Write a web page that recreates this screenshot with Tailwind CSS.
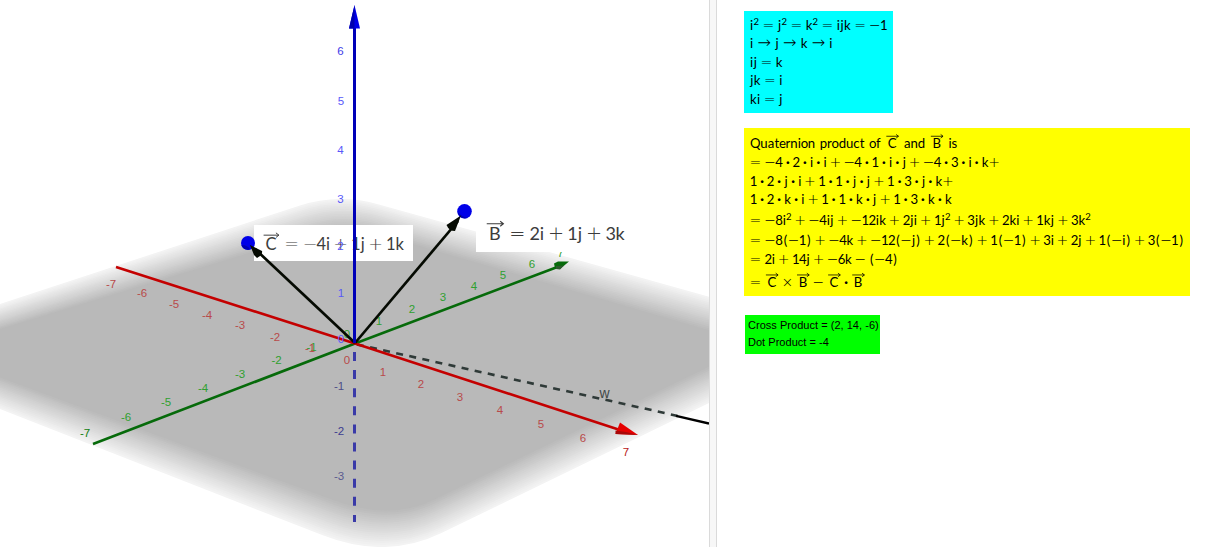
<!DOCTYPE html>
<html lang="en">
<head>
    <meta charset="UTF-8">
    <meta name="viewport" content="width=device-width, initial-scale=1.0">
    <title>Quaternion Product</title>
    <script src="https://cdn.jsdelivr.net/npm/@tailwindcss/browser@4"></script>
</head>
<body class="bg-white h-[549px] overflow-hidden">
    <div class="flex h-[547px]">
        <!-- 3D view -->
        <main class="w-[709px] shrink-0 overflow-hidden">
            <svg id="view3d" class="block font-['Liberation_Sans',sans-serif] text-[11.5px]" width="709" height="547" viewBox="0 0 709 547">
                <g id="plane"></g>
                <!-- Label backgrounds -->
                <rect x="254" y="225" width="159" height="36" fill="#fff"/>
                <!-- w vector -->
                <path d="M355 344L678 416" stroke="#2f3a38" stroke-width="2.6" stroke-dasharray="7 6.4" stroke-dashoffset="-2" fill="none"/>
                <path d="M676 415.800L709 423.500" stroke="#000" stroke-width="2.4"/>
                <!-- y axis -->
                <path d="M93 444L355 343.500L560 266" stroke="#066a0a" stroke-width="2.6" fill="none"/>
                <g id="yTicks"></g>
                <path d="M554 263.500L558 261.500L569 261.500L560 269L555 268Z" fill="#066a0a"/>
                <path d="M556 266L564 265.500L560 269.500L556 269Z" fill="#2c5a2c"/>
                <rect x="476" y="215" width="159" height="37" fill="#fff"/>
                <g id="labels"></g>
                <!-- x axis -->
                <path d="M116 267L355 343.500L620 430" stroke="#c40000" stroke-width="2.6" fill="none"/>
                <path d="M620 422.500L638 435L615.500 434Z" fill="#e60000"/>
                <path d="M615.500 430.500L626 432L638 435L615.500 434Z" fill="#a80808"/>
                <g id="xTicks"></g>
                <!-- Vectors C and B -->
                <g stroke="#050a02" stroke-width="2.7">
                    <path d="M355 343L255 249"/>
                    <path d="M355 343L458 221"/>
                </g>
                <circle cx="248" cy="243" r="7" fill="#0000e8"/>
                <path d="M241.500 245Q248 245 250 249.500Q243 250.500 241.500 245Z" fill="#0000b0"/>
                <circle cx="464.500" cy="211.300" r="7.300" fill="#0000e8"/>
                <path d="M457.500 212Q462 217 468 218Q460 220 457.500 212Z" fill="#0000b0"/>
                <path d="M250 245L262 251Q263 255 257 258L254 255Z" fill="#050a02"/>
                <path d="M461 215.500L446.500 225Q449 231 455 231Z" fill="#050a02"/>
                <!-- z axis -->
                <path d="M354.500 343V26" stroke="#0000b8" stroke-width="3"/>
                <path d="M354.500 352V522" stroke="#3a3aa8" stroke-width="3" stroke-dasharray="9 9.100"/>
                <path d="M354.500 5L360 28.500H349Z" fill="#0000e8"/>
                <path d="M354.500 5V28.500H349Z" fill="#0000b0"/>
                <g id="zTicks"></g>
                <text x="604.500" y="397.500" text-anchor="middle" fill="#3f4848" class="text-[14px]">w</text>
            </svg>
        </main>
        <div class="w-2 shrink-0 bg-[#f7f7f7] border-x border-[#dadada]"></div>
        <!-- Text panel -->
        <aside class="pl-[27px] pt-[11px] grow">
            <div class="w-[149px] h-[102px] bg-[#00ffff]">
                <svg id="rules" class="block" width="149" height="102"></svg>
            </div>
            <div class="mt-[15px] w-[446px] h-[168px] bg-[#ffff00]">
                <svg id="product" class="block" width="446" height="168"></svg>
            </div>
            <div class="mt-[19px] ml-px pl-[3px] pt-[2px] w-[135px] h-[39px] bg-[#00ff00] text-black font-['Liberation_Sans',sans-serif] text-[11px] leading-[17px] whitespace-nowrap tracking-[0.03px]">
                <p>Cross Product = (2, 14, -6)</p>
                <p>Dot Product = -4</p>
            </div>
        </aside>
    </div>

    <script>
        const NS = 'http://www.w3.org/2000/svg';

        function add(parent, tag, attrs, text) {
            const el = document.createElementNS(NS, tag);
            for (const key in attrs) el.setAttribute(key, attrs[key]);
            if (text !== undefined) el.textContent = text;
            parent.appendChild(el);
            return el;
        }

        // Plane fades out towards its edge: nested rounded quads, outer to inner
        const outer = [[-146, 352], [338, 193], [848, 335.5], [386, 560]];
        const inner = [[-72, 351], [344, 224], [756, 344], [390, 521]];
        const round = [0.12, 0.08, 0.12, 0.12];
        const steps = 18;
        for (let i = 0; i <= steps; i++) {
            const t = i / steps;
            const p = outer.map((o, n) => [o[0] + (inner[n][0] - o[0]) * t, o[1] + (inner[n][1] - o[1]) * t]);
            let d = '';
            p.forEach((c, n) => {
                const prev = p[(n + 3) % 4], next = p[(n + 1) % 4];
                const k = round[n];
                const a = [c[0] + (prev[0] - c[0]) * k, c[1] + (prev[1] - c[1]) * k];
                const b = [c[0] + (next[0] - c[0]) * k, c[1] + (next[1] - c[1]) * k];
                d += `${n ? 'L' : 'M'}${a}Q${c} ${b}`;
            });
            const g = Math.round(243 - 58 * t);
            add(document.getElementById('plane'), 'path', { d: d + 'Z', fill: `rgb(${g},${g},${g})` });
        }

        // Axis numbers: [text, centre x, centre y, colour]
        function ticks(id, list, color) {
            list.forEach(([s, x, y, c]) => add(document.getElementById(id), 'text', {
                x: x, y: y + 4, 'text-anchor': 'middle', fill: c || color
            }, s));
        }
        ticks('zTicks', [
            ['6', 340.5, 51, '#3c3ce8'], ['5', 341, 100.5], ['4', 340.5, 149.5], ['3', 340.5, 199], ['2', 340.5, 246],
            ['1', 341, 293], ['0', 341, 339], ['-1', 339, 386, '#4c4c88'], ['-2', 339, 431, '#3c3c90'], ['-3', 339, 476, '#5a5a90']
        ], '#5858fa');
        ticks('xTicks', [
            ['-7', 111, 284], ['-6', 142, 293], ['-5', 174, 303.5], ['-4', 207, 314.5], ['-3', 240, 325], ['-2', 275, 336.5],
            ['-1', 310, 348], ['0', 347, 360], ['1', 383, 372], ['2', 421, 384], ['3', 460, 397], ['4', 500, 410],
            ['5', 541, 423.5], ['6', 583, 437.5], ['7', 626, 452, '#b82020']
        ], '#b84a4a');
        ticks('yTicks', [
            ['-7', 85, 433, '#108010'], ['-6', 126, 417], ['-5', 166, 402], ['-4', 203, 388], ['-3', 240, 374], ['-2', 276.5, 360],
            ['-1', 311.5, 347], ['0', 347, 334], ['1', 379, 321], ['2', 412, 309], ['3', 443, 297], ['4', 474, 285.5],
            ['5', 503, 274.5], ['6', 532, 264], ['7', 560.5, 253]
        ], '#2fa02f');

        // Character widths in em
        const W = {
            Q: .736, u: .517, a: .481, t: .361, e: .444, r: .342, n: .517, i: .239, o: .5, p: .517, d: .517, c: .444,
            f: .306, s: .383, j: .267, k: .489, '+': .778, '−': .778, '=': .778, '×': .778, '·': .278, '→': 1,
            '(': .389, ')': .389, ' ': .222, '_': .333
        };

        // '~' puts an arrow over the next letter, '^' raises the next digit, '_' is a word space
        function math(svg, str, x, y, size, color) {
            const text = add(svg, 'text', { y: y, 'text-anchor': 'middle', fill: color, 'font-size': size * .94, class: "font-['Lato',sans-serif]" });
            for (let i = 0; i < str.length; i++) {
                let ch = str[i];
                if (ch === ' ' || ch === '_') {
                    add(text, 'tspan', { x: x + W[ch] * size / 2, y: y }, ' ');
                    x += W[ch] * size;
                } else if (ch === '~') {
                    ch = str[++i];
                    add(text, 'tspan', { x: x + size * .5, y: y }, ch);
                    const ay = y - size * .86, l = x + size * .08, r = x + size * .95, h = size * .13;
                    add(svg, 'path', {
                        d: `M${l} ${ay}H${r}M${r - h * 1.3} ${ay - h}L${r} ${ay}L${r - h * 1.3} ${ay + h}`,
                        stroke: color, 'stroke-width': size * .055, fill: 'none'
                    });
                    x += size;
                } else if (ch === '^') {
                    ch = str[++i];
                    add(text, 'tspan', { x: x + size * .2, y: y - size * .36, 'font-size': size * .68 }, ch);
                    x += size * .4;
                } else {
                    const w = (W[ch] || .5) * size;
                    const rel = ch === '=' || ch === '→' ? size * .278 : 0;
                    if (rel && i > 0) x += rel;
                    const attrs = { x: x + w / 2, y: y };
                    if ('+−=×→'.includes(ch)) {
                        attrs.class = "font-['DejaVu_Sans',sans-serif] font-extralight";
                        attrs['font-size'] = ch === '→' ? size * 1.15 : size;
                    }
                    if (ch === '·') attrs.class = 'font-black';
                    add(text, 'tspan', attrs, ch);
                    x += w + rel;
                }
            }
        }

        const labels = document.getElementById('labels');
        math(labels, '~C=−4i + 1j + 1k', 262.2, 250.3, 17.6, '#3c3c3c');
        math(labels, '~B=2i + 1j + 3k', 485.2, 240.3, 19.2, '#3c3c3c');

        const rules = document.getElementById('rules');
        [
            ['i^2=j^2=k^2=ijk=−1', 18.6], ['i→j→k→i', 37], ['ij=k', 55.6], ['jk=i', 74], ['ki=j', 92.6]
        ].forEach(([s, y]) => math(rules, s, 6, y, 14, '#000'));

        const product = document.getElementById('product');
        [
            ['Quaternion_product_of_~C_and_~B_is', 20.3],
            ['=−4 · 2 · i · i + −4 · 1 · i · j + −4 · 3 · i · k+', 39],
            ['1 · 2 · j · i + 1 · 1 · j · j + 1 · 3 · j · k+', 57.6],
            ['1 · 2 · k · i + 1 · 1 · k · j + 1 · 3 · k · k', 76],
            ['=−8i^2 + −4ij + −12ik + 2ji + 1j^2 + 3jk + 2ki + 1kj + 3k^2', 97],
            ['=−8(−1) + −4k + −12(−j) + 2(−k) + 1(−1) + 3i + 2j + 1(−i) + 3(−1)', 116.5],
            ['=2i + 14j + −6k − (−4)', 136.3],
            ['=~C × ~B − ~C · ~B', 159]
        ].forEach(([s, y]) => math(product, s, 6, y, 14, '#000'));
    </script>
</body>
</html>
